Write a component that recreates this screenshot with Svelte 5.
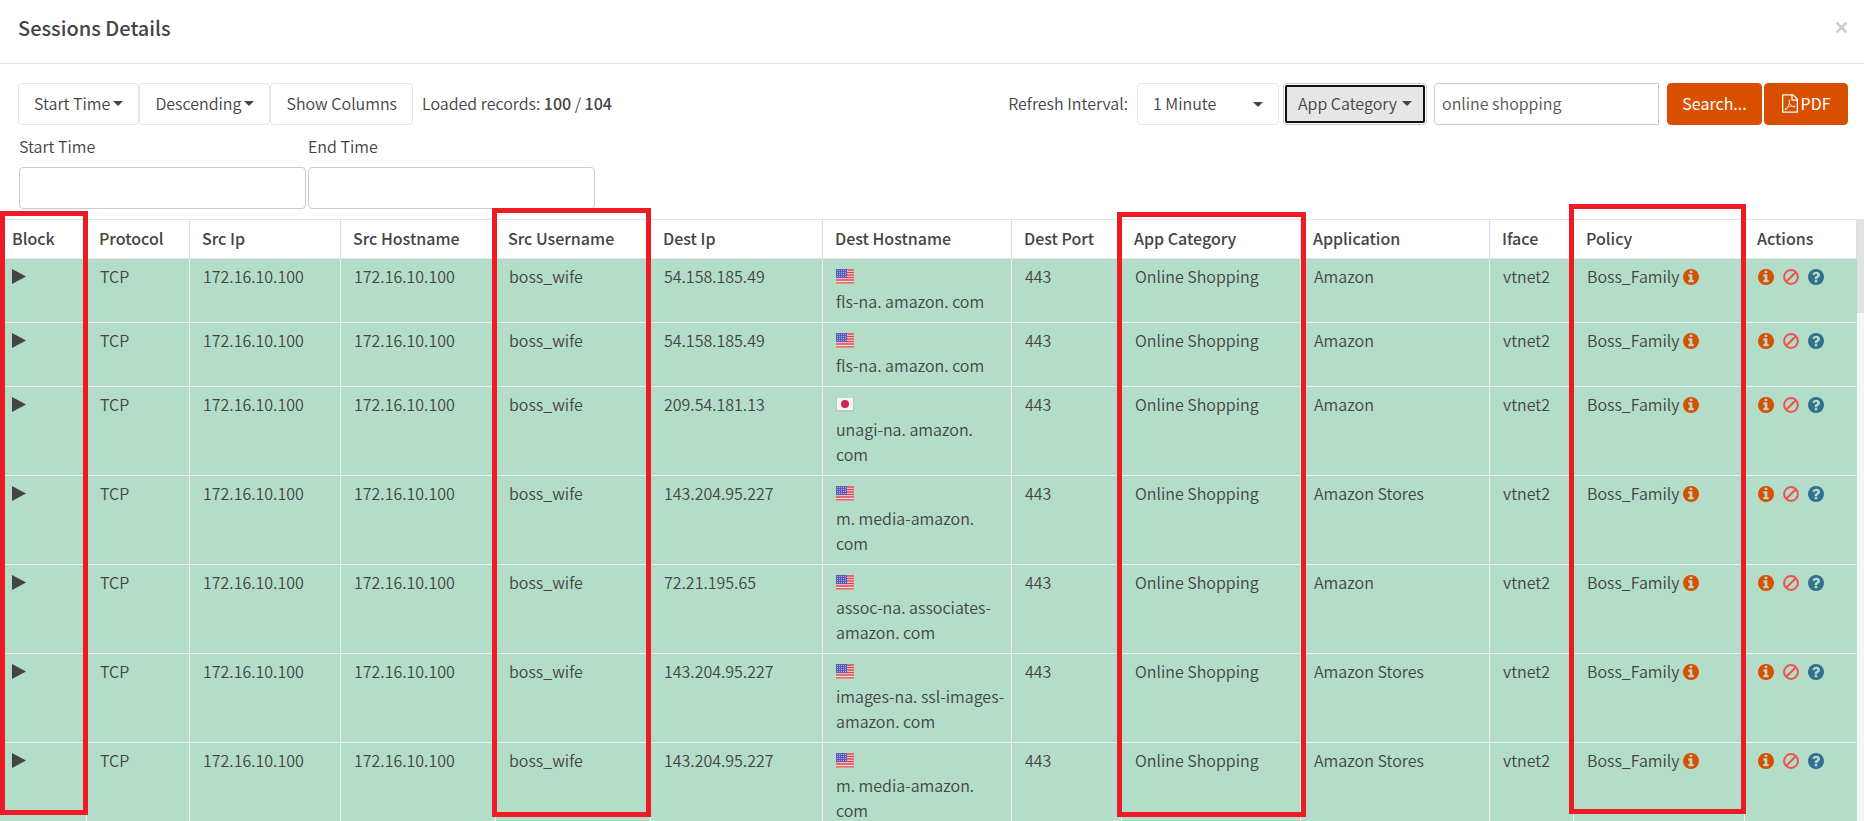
<script lang="ts">
	const columns = [
		{ title: 'Block', width: 87 },
		{ title: 'Protocol', width: 103 },
		{ title: 'Src Ip', width: 151 },
		{ title: 'Src Hostname', width: 155 },
		{ title: 'Src Username', width: 155 },
		{ title: 'Dest Ip', width: 172 },
		{ title: 'Dest Hostname', width: 189 },
		{ title: 'Dest Port', width: 110 },
		{ title: 'App Category', width: 179 },
		{ title: 'Application', width: 189 },
		{ title: 'Iface', width: 84 },
		{ title: 'Policy', width: 171 },
		{ title: 'Actions', width: 112 },
	];
	const tableWidth = columns.reduce((sum, c) => sum + c.width, 0);

	const sessions = [
		{ destIp: '54.158.185.49', country: 'us', host: 'fls-na. amazon. com', app: 'Amazon' },
		{ destIp: '54.158.185.49', country: 'us', host: 'fls-na. amazon. com', app: 'Amazon' },
		{ destIp: '209.54.181.13', country: 'jp', host: 'unagi-na. amazon.\ncom', app: 'Amazon' },
		{ destIp: '143.204.95.227', country: 'us', host: 'm. media-amazon.\ncom', app: 'Amazon Stores' },
		{ destIp: '72.21.195.65', country: 'us', host: 'assoc-na. associates-\namazon. com', app: 'Amazon' },
		{ destIp: '143.204.95.227', country: 'us', host: 'images-na. ssl-images-\namazon. com', app: 'Amazon Stores' },
		{ destIp: '143.204.95.227', country: 'us', host: 'm. media-amazon.\ncom', app: 'Amazon Stores' },
	];

	// Frames drawn round the highlighted columns
	const frames = [
		{ left: 0, width: 88, top: -8, bottom: 6 },
		{ left: 492, width: 159, top: -11, bottom: 4 },
		{ left: 1117, width: 189, top: -7, bottom: 4 },
		{ left: 1569, width: 177, top: -15, bottom: 7 },
	];

	let interval = '1 Minute';
	let search = 'online shopping';
	let startTime = '';
	let endTime = '';

	const pct = (n: number) => (n / tableWidth) * 100 + '%';
</script>

{#snippet infoIcon()}
	<svg class="icon info" viewBox="0 128 1536 1536" aria-hidden="true">
		<path d="M1024 1376v-160q0-14-9-23t-23-9h-96v-512q0-14-9-23t-23-9h-320q-14 0-23 9t-9 23v160q0 14 9 23t23 9h96v320h-96q-14 0-23 9t-9 23v160q0 14 9 23t23 9h448q14 0 23-9t9-23zm-128-896v-160q0-14-9-23t-23-9h-192q-14 0-23 9t-9 23v160q0 14 9 23t23 9h192q14 0 23-9t9-23zm640 416q0 209-103 385.500t-279.500 279.500-385.500 103-385.500-103-279.500-279.500-103-385.500 103-385.500 279.500-279.500 385.500-103 385.500 103 279.500 279.500 103 385.500z" />
	</svg>
{/snippet}

<main>
	<header>
		<h1>Sessions Details</h1>
		<button class="close" aria-label="Close">
			<svg viewBox="0 0 12 12" aria-hidden="true"><path d="M1.500 1.500l9 9M10.500 1.500l-9 9" /></svg>
		</button>
	</header>

	<div class="toolbar">
		<div class="group">
			<button class="btn">Start Time<span class="caret"></span></button>
			<button class="btn">Descending<span class="caret"></span></button>
			<button class="btn">Show Columns</button>
			<span class="loaded">Loaded records: <b>100</b> / <b>104</b></span>
		</div>
		<div class="group">
			<label for="interval">Refresh Interval:</label>
			<div class="select">
				<select id="interval" bind:value={interval}>
					<option>1 Minute</option>
					<option>5 Minutes</option>
				</select>
				<span class="caret"></span>
			</div>
			<button class="btn category">App Category<span class="caret"></span></button>
			<input class="search" type="text" aria-label="Search" bind:value={search} />
			<button class="btn primary">Search...</button>
			<button class="btn primary pdf">
				<svg viewBox="0 0 1536 1792" aria-hidden="true">
					<path d="M1468 380q28 28 48 76t20 88v1152q0 40-28 68t-68 28h-1344q-40 0-68-28t-28-68v-1600q0-40 28-68t68-28h896q40 0 88 20t76 48zm-444-244v376h376q-10-29-22-41l-313-313q-12-12-41-22zm384 1528v-1024h-416q-40 0-68-28t-28-68v-416h-768v1536h1280zm-514-593q33 26 84 56 59-7 117-7 147 0 177 49 16 22 2 52 0 1-1 2l-2 2v1q-6 38-71 38-48 0-115-20t-130-53q-221 24-392 83-153 262-242 262-15 0-28-7l-24-12q-1-1-6-5-10-10-6-36 9-40 56-91.500t132-96.500q14-9 23 6 2 2 2 4 52-85 107-197 68-136 104-262-24-82-30.500-159.500t6.500-127.500q11-40 42-40h22q23 0 35 15 18 21 9 68-2 6-4 8 1 3 1 8v30q-2 123-14 192 55 164 146 238zm-576 411q52-24 137-158-51 40-87.500 84t-49.500 74zm398-920q-15 42-2 132 1-7 7-44 0-3 7-43 1-4 4-8-1-1-1-2t-1-2q-1-22-13-36 0 1-1 2v2zm-124 661q135-54 284-81-2-1-13-9.500t-16-13.500q-76-67-127-176-27 86-83 197-30 56-45 83zm646-16q-24-24-140-24 76 28 124 28 14 0 18-1 0-1-2-3z" />
				</svg>PDF
			</button>
		</div>
	</div>

	<div class="times">
		<div class="field">
			<label for="start">Start Time</label>
			<input id="start" type="text" bind:value={startTime} />
		</div>
		<div class="field">
			<label for="end">End Time</label>
			<input id="end" type="text" bind:value={endTime} />
		</div>
	</div>

	<div class="grid">
		<div class="rows">
			<table>
				<colgroup>
					{#each columns as column}
						<col style="width: {pct(column.width)}" />
					{/each}
				</colgroup>
				<thead>
					<tr>
						{#each columns as column}
							<th>{column.title}</th>
						{/each}
					</tr>
				</thead>
				<tbody>
					{#each sessions as session}
						<tr>
							<td>
								<button class="plain" aria-label="Block">
									<svg class="play" viewBox="0 0 14 15" aria-hidden="true"><path d="M0 0l14 7.500-14 7.500z" /></svg>
								</button>
							</td>
							<td>TCP</td>
							<td>172.16.10.100</td>
							<td>172.16.10.100</td>
							<td>boss_wife</td>
							<td>{session.destIp}</td>
							<td>
								<div class="country">
									{#if session.country === 'us'}
										<svg class="flag" viewBox="0 0 18 15" role="img" aria-label="United States">
											<rect width="18" height="15" rx="1" fill="#f6dede" />
											<path d="M0 1h18M0 3.500h18M0 6h18M0 8.500h18M0 11h18M0 13.800h18" stroke="#d8474b" stroke-width="1.300" />
											<rect width="11" height="9" fill="#5a5cb8" />
											<path d="M1 1.500h10M1 3.500h10M1 5.500h10M1 7.500h10" stroke="#a9abe6" stroke-width="1" stroke-dasharray="1 1" />
										</svg>
									{:else}
										<svg class="flag" viewBox="0 0 18 15" role="img" aria-label="Japan">
											<rect y="1" width="18" height="14" rx="1" fill="#b9c9c0" />
											<rect x="1" y="1" width="16" height="12" rx="1" fill="#f6f4f4" />
											<circle cx="9" cy="7" r="4" fill="#cc2a50" />
										</svg>
									{/if}
								</div>
								<div class="host">{session.host}</div>
							</td>
							<td>443</td>
							<td>Online Shopping</td>
							<td>{session.app}</td>
							<td>vtnet2</td>
							<td>
								<div class="policy">
									Boss_Family
									<button class="plain" aria-label="Policy info">{@render infoIcon()}</button>
								</div>
							</td>
							<td>
								<div class="actions">
									<button class="plain" aria-label="Session info">{@render infoIcon()}</button>
									<button class="plain" aria-label="Block session">
										<svg class="icon ban" viewBox="0 0 16 16" aria-hidden="true">
											<circle cx="8" cy="8" r="6.900" /><path d="M3.200 12.800l9.600-9.600" />
										</svg>
									</button>
									<button class="plain" aria-label="Help">
										<svg class="icon help" viewBox="0 128 1536 1536" aria-hidden="true">
											<path d="M896 1376v-192q0-14-9-23t-23-9h-192q-14 0-23 9t-9 23v192q0 14 9 23t23 9h192q14 0 23-9t9-23zm256-672q0-88-55.500-163t-138.500-116-170-41q-243 0-371 213-15 24 8 42l132 100q7 6 19 6 16 0 25-12 53-68 86-92 34-24 86-24 48 0 85.500 26t37.500 59q0 38-20 61t-68 45q-63 28-115.500 86.500t-52.500 125.500v36q0 14 9 23t23 9h192q14 0 23-9t9-23q0-19 21.500-49.500t54.500-49.500q32-18 49-28.500t46-35 44.500-48 28-60.500 12.500-81zm384 192q0 209-103 385.500t-279.500 279.500-385.500 103-385.500-103-279.500-279.500-103-385.500 103-385.500 279.500-279.500 385.500-103 385.500 103 279.500 279.500 103 385.500z" />
										</svg>
									</button>
								</div>
							</td>
						</tr>
					{/each}
				</tbody>
			</table>
		</div>
		<div class="scrollbar"><div class="thumb"></div></div>
		<div class="frames">
			{#each frames as frame}
				<div class="frame" style="left: {pct(frame.left)}; width: {pct(frame.width)}; top: {frame.top}px; bottom: {frame.bottom}px"></div>
			{/each}
		</div>
	</div>
</main>

<style>
	:global(body) {
		margin: 0;
		background: #fff;
	}

	main {
		display: flex;
		flex-direction: column;
		height: 100vh;
		overflow: hidden;
		font-family: "Noto Sans CJK SC", "Noto Sans", sans-serif;
		font-size: 16px;
		font-weight: 350;
		line-height: 25px;
		color: #444;
	}

	main * {
		box-sizing: border-box;
	}

	header {
		display: flex;
		justify-content: space-between;
		align-items: center;
		height: 64px;
		padding: 0 16px 8px 18px;
		border-bottom: 1px solid #e2e2e2;
		flex: none;
	}

	h1 {
		margin: 0;
		font-size: 20px;
		font-weight: 500;
	}

	button,
	input,
	select {
		font: inherit;
		color: inherit;
	}

	button {
		cursor: pointer;
	}

	.close,
	.plain {
		display: flex;
		padding: 0;
		border: 0;
		background: none;
	}

	.close svg {
		width: 13px;
		height: 13px;
		fill: none;
		stroke: #ccc;
		stroke-width: 2.4;
	}

	.toolbar {
		display: flex;
		justify-content: space-between;
		padding: 19px 16px 0 18px;
		flex: none;
	}

	.group {
		display: flex;
		align-items: center;
	}

	.btn {
		display: flex;
		align-items: center;
		justify-content: center;
		gap: 3px;
		height: 42px;
		padding: 0 15px 2px;
		border: 1px solid #e5e5e5;
		border-radius: 4px;
		background: #fff;
		white-space: nowrap;
	}

	.caret {
		border: 5px solid transparent;
		border-top-color: #444;
		border-bottom: 0;
	}

	label,
	.loaded {
		padding-bottom: 2px;
		white-space: nowrap;
	}

	.loaded {
		margin-left: 9px;
	}

	.loaded b {
		font-weight: 500;
	}

	.select {
		position: relative;
		width: 142px;
		margin: 0 4px 0 9px;
	}

	.select select {
		width: 100%;
		height: 42px;
		padding: 0 15px 2px;
		border: 1px solid #e5e5e5;
		border-radius: 4px;
		background: #fff;
		appearance: none;
	}

	.select .caret {
		position: absolute;
		right: 16px;
		top: 19px;
		pointer-events: none;
	}

	.category {
		width: 144px;
		gap: 5px;
		border-color: #ccc;
		background: #e6e6e6;
		outline: 2px solid #101010;
		outline-offset: -4px;
		box-shadow: inset 0 0 0 1px #fff;
	}

	input {
		height: 42px;
		padding: 0 7px 2px;
		border: 1px solid #ccc;
		border-radius: 4px;
		background: #fff;
	}

	.search {
		width: 225px;
		margin: 0 8px 0 7px;
		border-radius: 4px 0 0 4px;
		color: #555;
	}

	.primary {
		width: 95px;
		border-color: #d94f00;
		background: #d94f00;
		color: #fff;
		font-weight: 400;
	}

	.pdf {
		width: 84px;
		margin-left: 2px;
	}

	.pdf svg {
		width: 16px;
		height: 19px;
		fill: #fff;
	}

	.times {
		display: flex;
		gap: 2px;
		padding: 9px 19px 10px;
		flex: none;
	}

	.field {
		display: flex;
		flex-direction: column;
		gap: 6px;
		width: 287px;
	}

	.grid {
		display: flex;
		position: relative;
		flex: 1;
		min-height: 0;
	}

	.rows {
		flex: 1;
		overflow: hidden;
	}

	table {
		width: 100%;
		table-layout: fixed;
		border-collapse: separate;
		border-spacing: 0;
		border-top: 1px solid #e2e2e2;
	}

	th {
		height: 39px;
		padding: 0 12px 2px;
		border-right: 1px solid #ddd;
		border-bottom: 1px solid #e8e8e8;
		font-weight: 500;
		text-align: left;
		white-space: nowrap;
	}

	td {
		padding: 5px 0 8px 13px;
		border-right: 1px solid #eee;
		border-bottom: 1px solid #eee;
		background: #b3ddc8;
		vertical-align: top;
		white-space: nowrap;
	}

	td:first-child {
		padding-left: 12px;
	}

	td:last-child {
		border-right-color: #b3ddc8;
	}

	td .plain {
		height: 25px;
		align-items: center;
	}

	.play {
		width: 14px;
		height: 15px;
		fill: #444;
	}

	.country {
		display: flex;
		align-items: center;
		height: 25px;
	}

	.flag {
		width: 18px;
		height: 15px;
	}

	.host {
		white-space: pre-line;
	}

	.policy {
		display: flex;
		gap: 3px;
	}

	.actions {
		display: flex;
		gap: 9px;
	}

	.icon {
		width: 16px;
		height: 16px;
	}

	.info {
		fill: #d94f00;
	}

	.help {
		fill: #31708f;
	}

	.ban {
		fill: none;
		stroke: #f05050;
		stroke-width: 2;
	}

	.scrollbar {
		width: 7px;
		background: #f5f5f5;
	}

	.thumb {
		height: 94px;
		background: #e2e2e2;
	}

	.frames {
		position: absolute;
		inset: 0 7px 0 0;
		pointer-events: none;
	}

	.frame {
		position: absolute;
		border: 5px solid #ed1c24;
	}
</style>
